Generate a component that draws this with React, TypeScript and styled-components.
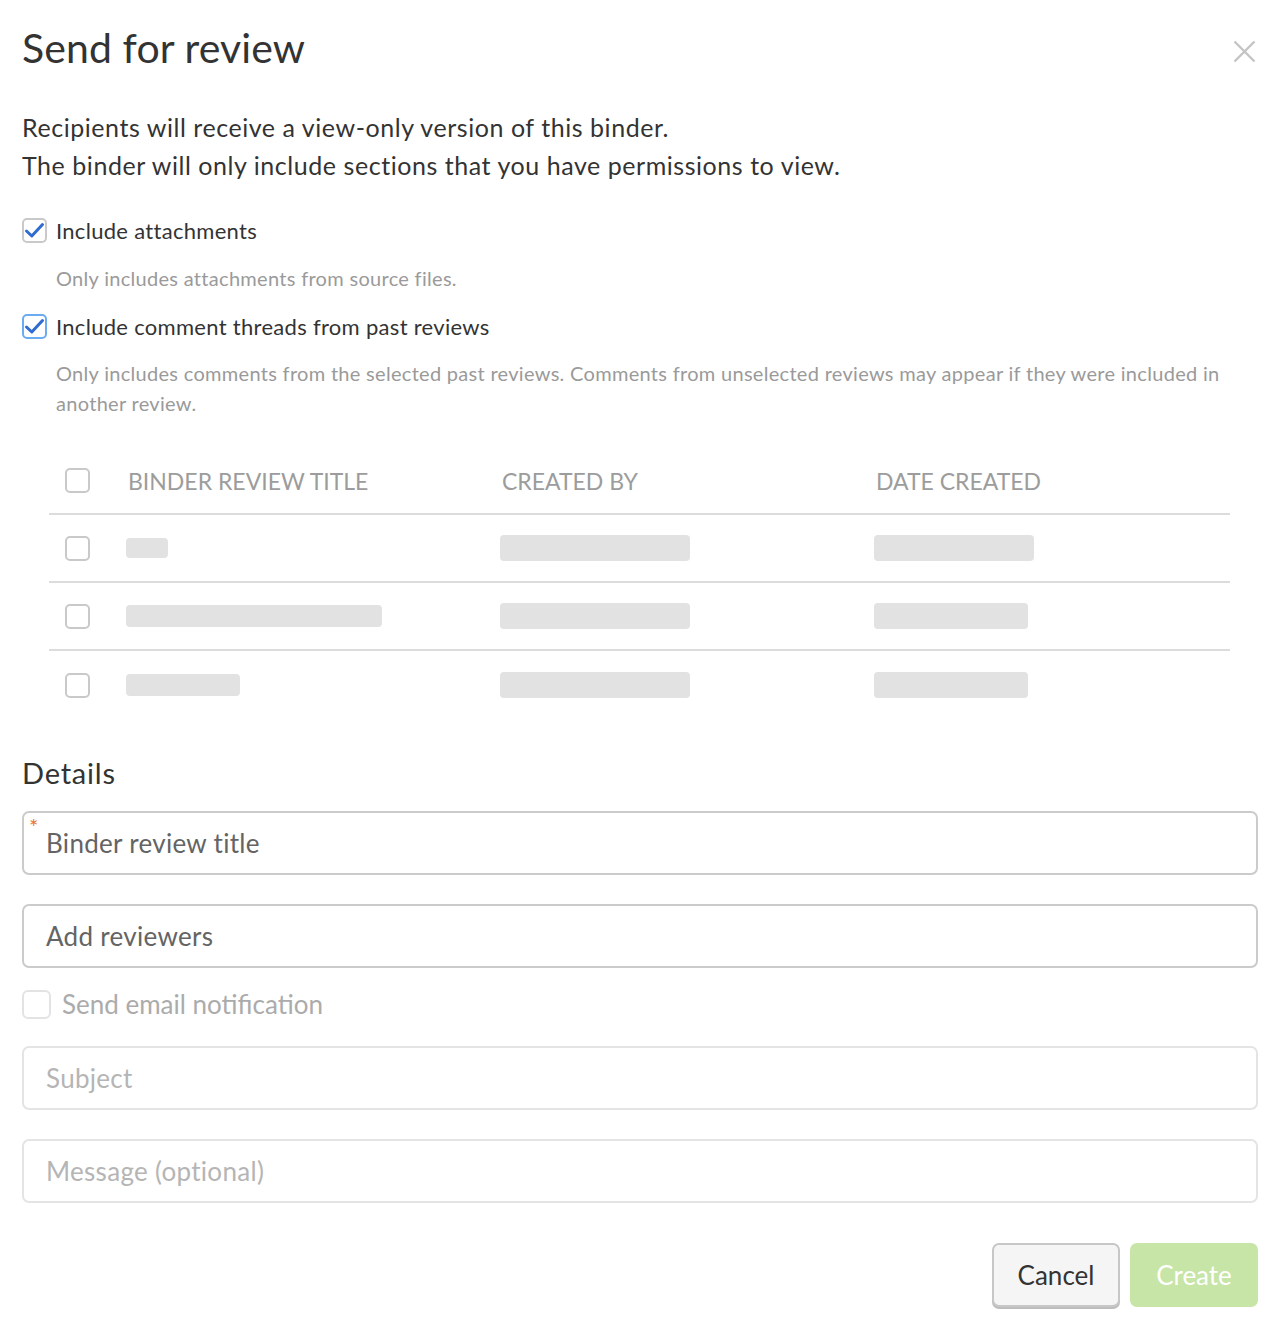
import React from "react";
import styled, { createGlobalStyle } from "styled-components";

const GlobalStyle = createGlobalStyle`
  html, body { margin: 0; padding: 0; background: #ffffff; }
  body { font-family: Lato, "Open Sans", sans-serif; color: #333333; }
  * { box-sizing: border-box; }
`;

const Dialog = styled.div`
  width: 1280px;
  padding: 0 22px 17px 22px;
  display: flex;
  flex-direction: column;
`;

const Header = styled.div`
  margin-top: 24px;
  display: flex;
  justify-content: space-between;
  align-items: flex-start;
`;

const Title = styled.h1`
  margin: 0;
  font-size: 41px;
  line-height: 48px;
  font-weight: 400;
  letter-spacing: 0.1px;
  color: #333;
`;

const CloseButton = styled.button`
  border: none;
  background: transparent;
  padding: 0;
  margin: 16px 2px 0 0;
  width: 23px;
  height: 23px;
  display: flex;
  cursor: pointer;
`;

const Intro = styled.p`
  margin: 36px 0 0 0;
  font-size: 25px;
  line-height: 38px;
  letter-spacing: 0.55px;
  color: #333;
`;

const CheckRow = styled.label<{ $top: number }>`
  margin-top: ${(p) => p.$top}px;
  display: flex;
  align-items: center;
  gap: 9px;
  font-size: 22px;
  line-height: 24px;
  letter-spacing: 0.3px;
  color: #333;
`;

const Box = styled.span<{ $focus?: boolean; $size?: number; $disabled?: boolean }>`
  width: ${(p) => p.$size ?? 25}px;
  height: ${(p) => p.$size ?? 25}px;
  flex: none;
  border-radius: ${(p) => (p.$size && p.$size > 26 ? 6 : 5)}px;
  border: 2px solid
    ${(p) => (p.$focus ? "#6aabf2" : p.$disabled ? "#e3e3e3" : "#c9c9c9")};
  background: #fff;
  display: flex;
  align-items: center;
  justify-content: center;
`;

const Helper = styled.p<{ $top: number }>`
  margin: ${(p) => p.$top}px 0 0 0;
  padding: 0 0 0 34px;
  font-size: 20px;
  line-height: 30px;
  letter-spacing: 0.3px;
  color: #9a9a9a;
`;

const Table = styled.div`
  margin: 30px 28px 0 27px;
  display: flex;
  flex-direction: column;
`;

const Row = styled.div<{ $head?: boolean }>`
  display: grid;
  grid-template-columns: 77px 374px 374px 1fr;
  align-items: center;
  height: ${(p) => (p.$head ? 67 : 68)}px;
  border-bottom: 2px solid #dcdcdc;
  &:last-child { border-bottom: none; }
`;

const BoxCell = styled.div`
  padding-left: 16px;
  display: flex;
`;

const HeadCell = styled.div`
  font-size: 23px;
  color: #9c9c9c;
  padding-left: 2px;
  letter-spacing: 0px;
`;

const Bar = styled.div<{ $w: number; $h: number }>`
  width: ${(p) => p.$w}px;
  height: ${(p) => p.$h}px;
  border-radius: 4px;
  background: #e2e2e2;
`;

const SectionTitle = styled.h2`
  margin: 37px 0 0 0;
  font-size: 29px;
  line-height: 34px;
  font-weight: 400;
  letter-spacing: 0.8px;
  color: #333;
`;

const Field = styled.div<{ $top: number; $disabled?: boolean }>`
  position: relative;
  margin-top: ${(p) => p.$top}px;
  height: 64px;
  border: 2px solid ${(p) => (p.$disabled ? "#e4e4e4" : "#cbcbcb")};
  border-radius: 7px;
  display: flex;
  align-items: center;
  padding-left: 22px;
  font-size: 26px;
  letter-spacing: 0.3px;
  color: ${(p) => (p.$disabled ? "#b5b5b5" : "#646464")};
`;

const Required = styled.span`
  position: absolute;
  left: 5px;
  top: 3px;
  font-size: 22px;
  line-height: 22px;
  color: #e8742f;
`;

const EmailRow = styled.label`
  margin-top: 22px;
  display: flex;
  align-items: center;
  gap: 11px;
  font-size: 26px;
  line-height: 29px;
  color: #ababab;
`;

const Footer = styled.div`
  margin-top: 40px;
  display: flex;
  justify-content: flex-end;
  gap: 10px;
`;

const Button = styled.button<{ $primary?: boolean }>`
  width: 128px;
  height: 64px;
  border-radius: 7px;
  font-family: Lato, "Open Sans", sans-serif;
  font-size: 26px;
  cursor: pointer;
  border: ${(p) => (p.$primary ? "none" : "2px solid #c7c7c7")};
  background: ${(p) => (p.$primary ? "#c7e5a7" : "#f5f5f5")};
  color: ${(p) => (p.$primary ? "#ffffff" : "#333333")};
  box-shadow: ${(p) => (p.$primary ? "none" : "0 2px 0 #bdbdbd")};
`;

const Check = () => (
  <svg width="21" height="17" viewBox="0 0 21 17">
    <path d="M2.5 9 L7.8 14 L18.5 2.5" fill="none" stroke="#2f6bd0" strokeWidth="3" strokeLinecap="round" strokeLinejoin="round" />
  </svg>
);

const rows = [
  { t: [42, 20], c: [190, 26], d: [160, 26] },
  { t: [256, 22], c: [190, 26], d: [154, 26] },
  { t: [114, 22], c: [190, 26], d: [154, 26] },
];

export default function App() {
  return (
    <>
      <GlobalStyle />
      <Dialog>
        <Header>
          <Title>Send for review</Title>
          <CloseButton aria-label="Close">
            <svg width="23" height="23" viewBox="0 0 23 23">
              <path d="M1.5 1.5 L21.5 21.5 M21.5 1.5 L1.5 21.5" stroke="#c4c4c4" strokeWidth="2.4" />
            </svg>
          </CloseButton>
        </Header>
        <Intro>
          Recipients will receive a view-only version of this binder.
          <br />
          The binder will only include sections that you have permissions to view.
        </Intro>
        <CheckRow $top={34}>
          <Box>
            <Check />
          </Box>
          Include attachments
        </CheckRow>
        <Helper $top={20}>Only includes attachments from source files.</Helper>
        <CheckRow $top={21}>
          <Box $focus>
            <Check />
          </Box>
          Include comment threads from past reviews
        </CheckRow>
        <Helper $top={19}>
          Only includes comments from the selected past reviews. Comments from unselected reviews may appear if they were included in another review.
        </Helper>
        <Table>
          <Row $head>
            <BoxCell>
              <Box />
            </BoxCell>
            <HeadCell>BINDER REVIEW TITLE</HeadCell>
            <HeadCell>CREATED BY</HeadCell>
            <HeadCell>DATE CREATED</HeadCell>
          </Row>
          {rows.map((r, i) => (
            <Row key={i}>
              <BoxCell>
                <Box />
              </BoxCell>
              <Bar $w={r.t[0]} $h={r.t[1]} />
              <Bar $w={r.c[0]} $h={r.c[1]} />
              <Bar $w={r.d[0]} $h={r.d[1]} />
            </Row>
          ))}
        </Table>
        <SectionTitle>Details</SectionTitle>
        <Field $top={21}>
          <Required>*</Required>
          Binder review title
        </Field>
        <Field $top={29}>Add reviewers</Field>
        <EmailRow>
          <Box $disabled $size={29} />
          Send email notification
        </EmailRow>
        <Field $top={27} $disabled>
          Subject
        </Field>
        <Field $top={29} $disabled>
          Message (optional)
        </Field>
        <Footer>
          <Button>Cancel</Button>
          <Button $primary>Create</Button>
        </Footer>
      </Dialog>
    </>
  );
}
